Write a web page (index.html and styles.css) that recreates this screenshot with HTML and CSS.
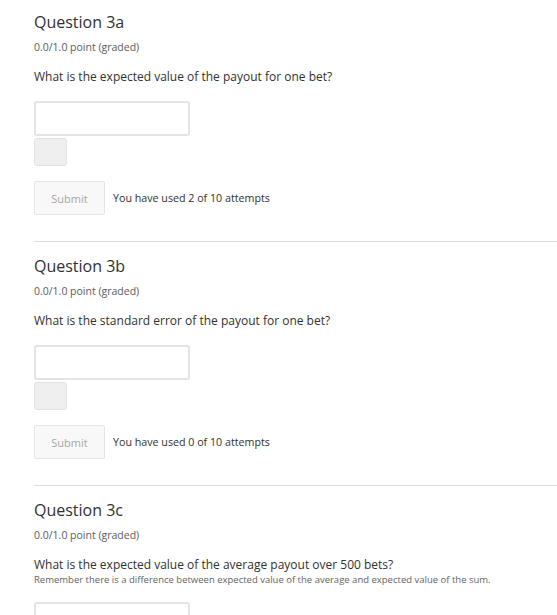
FILE: index.html
```html
<!DOCTYPE html>
<html lang="en">
<head>
<meta charset="utf-8">
<title>Problems</title>
<link rel="stylesheet" href="styles.css">
</head>
<body>
<main class="problems">
  <section class="problem">
    <h3 class="problem-title">Question 3a</h3>
    <div class="problem-progress">0.0/1.0 point (graded)</div>
    <p class="problem-text">What is the expected value of the payout for one bet?</p>
    <input class="answer" type="text" aria-label="answer">
    <span class="status"></span>
    <div class="actions">
      <button class="submit" type="button">Submit</button>
      <span class="attempts">You have used 2 of 10 attempts</span>
    </div>
    <hr class="divider">
  </section>
  <section class="problem">
    <h3 class="problem-title">Question 3b</h3>
    <div class="problem-progress">0.0/1.0 point (graded)</div>
    <p class="problem-text">What is the standard error of the payout for one bet?</p>
    <input class="answer" type="text" aria-label="answer">
    <span class="status"></span>
    <div class="actions">
      <button class="submit" type="button">Submit</button>
      <span class="attempts">You have used 0 of 10 attempts</span>
    </div>
    <hr class="divider">
  </section>
  <section class="problem">
    <h3 class="problem-title">Question 3c</h3>
    <div class="problem-progress">0.0/1.0 point (graded)</div>
    <p class="problem-text">What is the expected value of the average payout over 500 bets?<span class="hint">Remember there is a difference between expected value of the average and expected value of the sum.</span></p>
    <input class="answer" type="text" aria-label="answer">
  </section>
</main>
</body>
</html>
```

FILE: styles.css
```css
html {
  overflow: hidden;
}

body {
  margin: 0;
  background: #fff;
  font-family: "Open Sans", "Liberation Sans", sans-serif;
  color: #313131;
}

.problems {
  padding: 11px 0 0 34px;
}

.problem {
  display: flex;
  flex-direction: column;
  align-items: flex-start;
}

.problem-title {
  margin: 0;
  font-size: 16px;
  line-height: 22px;
  font-weight: 400;
  color: #313131;
}

.problem-progress {
  margin-top: 7px;
  font-size: 10.5px;
  line-height: 15px;
  color: #5b5b5b;
}

.problem-text {
  margin: 13px 0 0;
  font-size: 12px;
  line-height: 17px;
  color: #313131;
}

.hint {
  display: block;
  font-size: 9.5px;
  line-height: 13px;
  color: #646464;
}

.answer {
  box-sizing: border-box;
  margin: 16px 0 0;
  width: 156px;
  height: 35px;
  border: 2px solid #e4e4e4;
  border-radius: 3px;
  background: #fff;
  padding: 0 8px;
}

.status {
  box-sizing: border-box;
  display: block;
  margin-top: 2px;
  width: 33px;
  height: 28px;
  background: #efefef;
  border: 1px solid #e2e2e2;
  border-radius: 3px;
}

.actions {
  margin-top: 15px;
  display: flex;
  align-items: center;
  gap: 8px;
}

.submit {
  box-sizing: border-box;
  width: 71px;
  height: 34px;
  background: #f8f8f8;
  border: 1px solid #e6e6e6;
  border-radius: 2px;
  font-family: "Open Sans", "Liberation Sans", sans-serif;
  font-size: 11px;
  color: #a6a6a6;
  padding: 0;
}

.attempts {
  font-size: 10.7px;
  line-height: 14px;
  color: #313131;
  margin-top: -1px;
}

.divider {
  align-self: stretch;
  margin: 26px 0 13px;
  border: 0;
  border-top: 1px solid #dddddd;
  height: 0;
}
```
